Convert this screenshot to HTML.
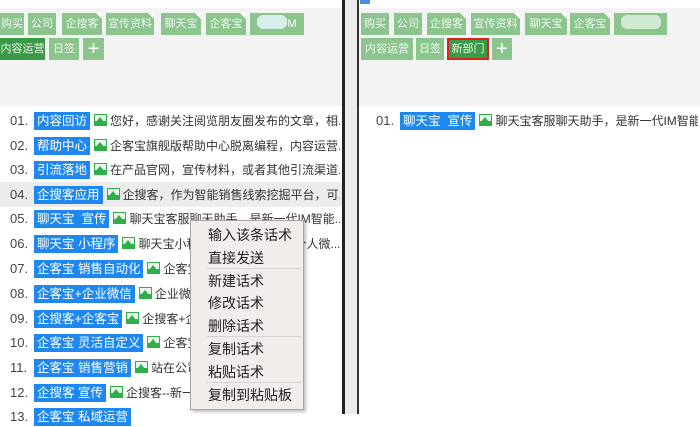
<!DOCTYPE html><html><head><meta charset="utf-8"><style>
*{margin:0;padding:0;box-sizing:border-box}
body{width:700px;height:414px;overflow:hidden;background:#fff;position:relative;font-family:"Liberation Sans","Noto Sans CJK SC",sans-serif;}
.abs{position:absolute}
.gray{background:#f3f3f3}
.t{position:absolute;height:22px;background:#8cc48e;color:#eef7ee;font-size:11px;line-height:22px;text-align:center}
.t.d{background:#3a9a45;color:#e8f5e8}
.t.c::after{content:"";position:absolute;right:0;top:0;border-top:6px solid #fff;border-left:6px solid transparent}
.row{position:absolute;height:20px;font-size:12px;color:#333;white-space:nowrap;line-height:20px;overflow:hidden}
.n{display:inline-block;width:24px;font-size:13px;color:#444}
.tag{display:inline-block;height:18px;background:#1e88f0;color:#fff;font-size:12.5px;line-height:18px;padding:0 3px;margin-right:4px;vertical-align:0}
.ic{display:inline-block;width:13px;height:12px;background:#2fae4a;position:relative;vertical-align:-1px;margin-right:3px;overflow:hidden}
.ic::before{content:"";position:absolute;left:1px;top:1px;width:11px;height:6px;background:#e8f7ea}
.ic::after{content:"";position:absolute;left:2px;top:3px;border-bottom:5px solid #2fae4a;border-left:4px solid transparent;border-right:4px solid transparent}
.menu{position:absolute;left:190px;top:220px;width:114px;height:190px;background:#f2ecea;border:1px solid #a9a4a2;box-shadow:2px 2px 3px rgba(0,0,0,.25);font-size:14px;color:#222}
.mi{position:absolute;left:17px}
.sep{position:absolute;left:16px;right:2px;height:1px;background:#d8d2d0}
</style></head><body>
<div class="abs gray" style="left:0;top:8px;width:342px;height:98px"></div>
<div class="abs" style="left:342px;top:0;width:3px;height:414px;background:#222"></div>
<div class="abs" style="left:345px;top:0;width:12px;height:414px;background:#ececec"></div>
<div class="abs" style="left:357px;top:0;width:2px;height:414px;background:#333"></div>
<div class="abs gray" style="left:359px;top:8px;width:341px;height:98px"></div>
<div class="abs" style="left:360px;top:0;width:10px;height:4px;background:#4a90e2"></div>

<div class="t" style="left:0;top:13px;width:24px">购买</div>
<div class="t" style="left:28px;top:13px;width:28px">公司</div>
<div class="t c" style="left:62px;top:13px;width:40px">企搜客</div>
<div class="t c" style="left:106px;top:13px;width:48px">宣传资料</div>
<div class="t c" style="left:161px;top:13px;width:40px">聊天宝</div>
<div class="t c" style="left:206px;top:13px;width:40px">企客宝</div>
<div class="t" style="left:250px;top:13px;width:54px;color:#fff"><span style="display:inline-block;width:30px;height:14px;background:#d8eee8;border-radius:6px;vertical-align:-2px"></span>M</div>
<div class="t d" style="left:0;top:38px;width:45px">内容运营</div>
<div class="t" style="left:49px;top:38px;width:30px">日签</div>
<div class="t" style="left:83px;top:38px;width:21px;font-size:20px;color:#fff">+</div>

<div class="t" style="left:361px;top:13px;width:28px">购买</div>
<div class="t" style="left:394px;top:13px;width:28px">公司</div>
<div class="t c" style="left:427px;top:13px;width:39px">企搜客</div>
<div class="t c" style="left:471px;top:13px;width:49px">宣传资料</div>
<div class="t c" style="left:525px;top:13px;width:42px">聊天宝</div>
<div class="t c" style="left:570px;top:13px;width:40px">企客宝</div>
<div class="t" style="left:614px;top:13px;width:53px"><span style="display:inline-block;width:40px;height:14px;background:#cfe9d2;border-radius:6px;vertical-align:-2px"></span></div>
<div class="t" style="left:361px;top:38px;width:52px">内容运营</div>
<div class="t" style="left:416px;top:38px;width:28px">日签</div>
<div class="t d" style="left:447px;top:38px;width:42px;border:2px solid #e02020;line-height:18px">新部门</div>
<div class="t" style="left:492px;top:38px;width:20px;font-size:20px;color:#fff">+</div>

<div class="abs" style="left:0;top:182px;width:342px;height:25px;background:#ececec"></div>

<div class="row" style="left:10px;top:111px;width:330px"><span class="n">01.</span><span class="tag">内容回访</span><i class="ic"></i>您好，感谢关注阅览朋友圈发布的文章，相...</div>
<div class="row" style="left:10px;top:136px;width:330px"><span class="n">02.</span><span class="tag">帮助中心</span><i class="ic"></i>企客宝旗舰版帮助中心脱离编程，内容运营...</div>
<div class="row" style="left:10px;top:160px;width:330px"><span class="n">03.</span><span class="tag">引流落地</span><i class="ic"></i>在产品官网，宣传材料，或者其他引流渠道...</div>
<div class="row" style="left:10px;top:185px;width:330px"><span class="n">04.</span><span class="tag">企搜客应用</span><i class="ic"></i>企搜客，作为智能销售线索挖掘平台，可...</div>
<div class="row" style="left:10px;top:209px;width:330px"><span class="n">05.</span><span class="tag">聊天宝&nbsp; 宣传</span><i class="ic"></i>聊天宝客服聊天助手，是新一代IM智能...</div>
<div class="row" style="left:10px;top:234px;width:330px"><span class="n">06.</span><span class="tag">聊天宝 小程序</span><i class="ic"></i>聊天宝小程序，帮助企业员工个人微...</div>
<div class="row" style="left:10px;top:259px;width:330px"><span class="n">07.</span><span class="tag">企客宝 销售自动化</span><i class="ic"></i>企客宝客户管理...</div>
<div class="row" style="left:10px;top:284px;width:330px"><span class="n">08.</span><span class="tag">企客宝+企业微信</span><i class="ic"></i>企业微信聊天与...</div>
<div class="row" style="left:10px;top:309px;width:330px"><span class="n">09.</span><span class="tag">企搜客+企客宝</span><i class="ic"></i>企搜客+企客宝挖掘平...</div>
<div class="row" style="left:10px;top:333px;width:330px"><span class="n">10.</span><span class="tag">企客宝 灵活自定义</span><i class="ic"></i>企客宝灵活自定...</div>
<div class="row" style="left:10px;top:358px;width:330px"><span class="n">11.</span><span class="tag">企客宝 销售营销</span><i class="ic"></i>站在公司角度公司业...</div>
<div class="row" style="left:10px;top:383px;width:330px"><span class="n">12.</span><span class="tag">企搜客 宣传</span><i class="ic"></i>企搜客--新一代销售全网...</div>
<div class="row" style="left:10px;top:407px;width:330px"><span class="n">13.</span><span class="tag">企客宝 私域运营</span></div>

<div class="row" style="left:376px;top:111px;width:322px"><span class="n">01.</span><span class="tag">聊天宝&nbsp; 宣传</span><i class="ic"></i>聊天宝客服聊天助手，是新一代IM智能...</div>

<div class="menu">
<div class="mi" style="top:4px">输入该条话术</div>
<div class="mi" style="top:27px">直接发送</div>
<div class="sep" style="top:47px"></div>
<div class="mi" style="top:50px">新建话术</div>
<div class="mi" style="top:72px">修改话术</div>
<div class="mi" style="top:95px">删除话术</div>
<div class="sep" style="top:115px"></div>
<div class="mi" style="top:118px">复制话术</div>
<div class="mi" style="top:141px">粘贴话术</div>
<div class="sep" style="top:161px"></div>
<div class="mi" style="top:164px">复制到粘贴板</div>
</div>
</body></html>
